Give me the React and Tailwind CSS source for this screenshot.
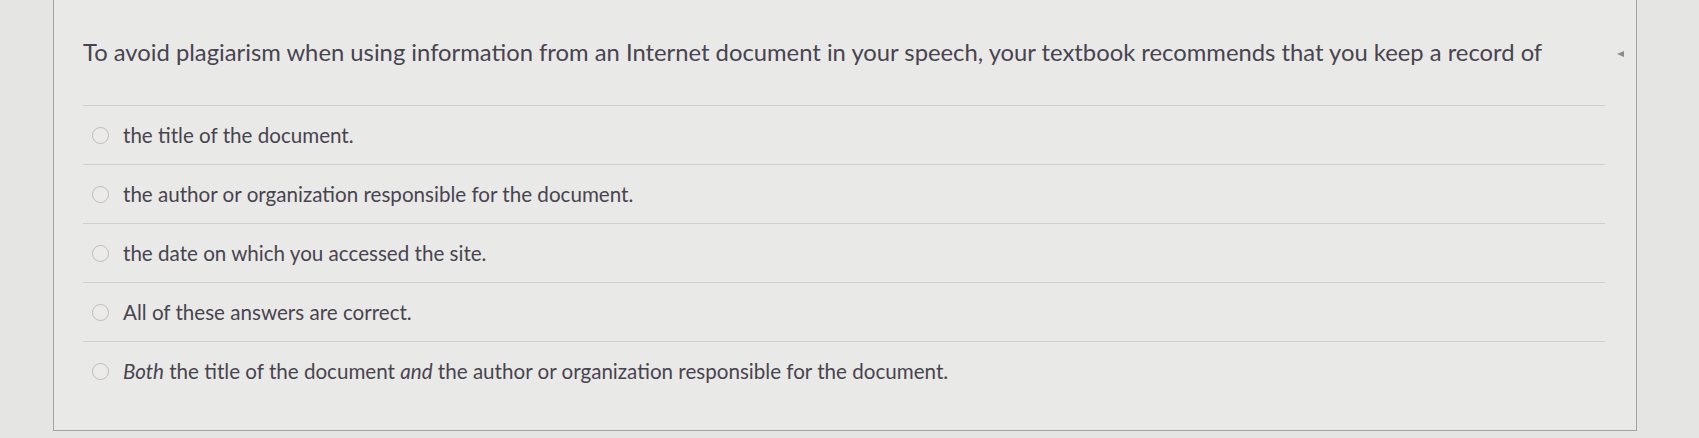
const options = [
  { id: "a", text: "the title of the document." },
  { id: "b", text: "the author or organization responsible for the document." },
  { id: "c", text: "the date on which you accessed the site." },
  { id: "d", text: "All of these answers are correct." },
  {
    id: "e",
    text: (
      <>
        <em>Both</em> the title of the document <em>and</em> the author or organization responsible for the document.
      </>
    ),
  },
];

function Radio() {
  return (
    <span className="inline-block w-[17px] h-[17px] shrink-0 rounded-full border-[1.5px] border-[#bdbcbc] bg-[#ecebea]" />
  );
}

export default function App() {
  return (
    <div
      className="w-full h-[438px] overflow-hidden bg-[#e5e5e3]"
      style={{ fontFamily: "Lato, 'Open Sans', sans-serif" }}
    >
      <div className="ml-[53px] w-[1584px] h-[431px] border-l border-r border-b border-[#a3a3a3] bg-[#e9e9e7] pl-[29px] pr-[31px]">
        <div className="flex items-center justify-between border-b border-[#cfcfcd] pt-[37px] pb-[38px]">
          <p className="text-[23.8px] leading-[30px] text-[#48444f] whitespace-nowrap">
            To avoid plagiarism when using information from an Internet document in your speech, your textbook
            recommends that you keep a record of
          </p>
          <svg width="10" height="10" viewBox="0 0 10 10" className="mr-[-20px] mt-[4px]">
            <path d="M9 2 L2 5 L9 8 Z" fill="#8d8b8f" />
          </svg>
        </div>
        {options.map((o, i) => (
          <label
            key={o.id}
            className={
              "flex items-center gap-[14px] h-[59px] pl-[9px] text-[20.6px] text-[#48444f] " +
              (i < options.length - 1 ? "border-b border-[#cfcfcd]" : "")
            }
          >
            <Radio />
            <span>{o.text}</span>
          </label>
        ))}
      </div>
    </div>
  );
}
